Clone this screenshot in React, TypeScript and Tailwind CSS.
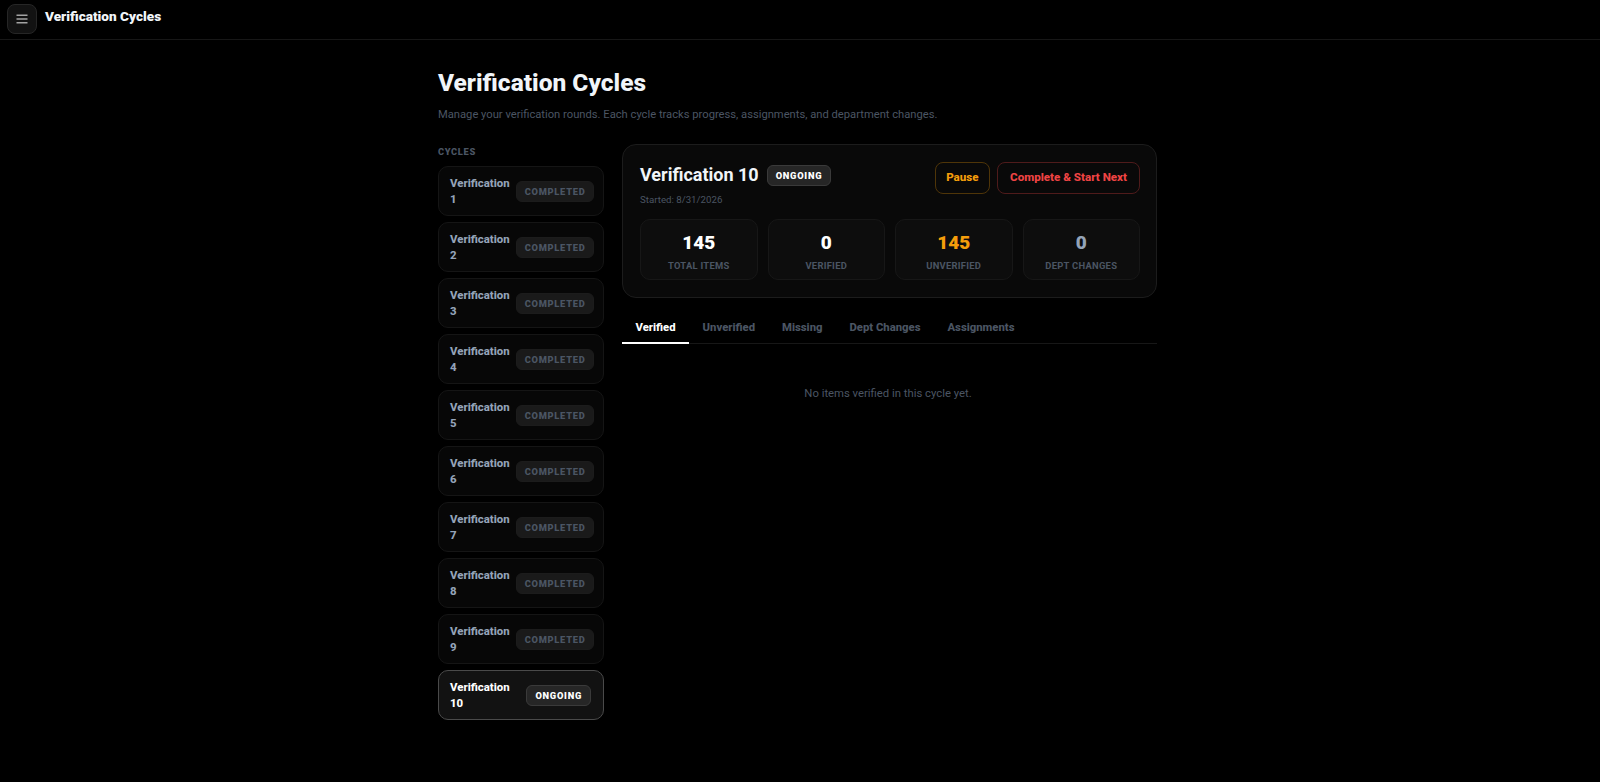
const font = "font-['Roboto','Noto_Sans',sans-serif]";

const cycles = [1, 2, 3, 4, 5, 6, 7, 8, 9, 10];

const stats = [
  { label: "TOTAL ITEMS", value: "145", color: "text-white" },
  { label: "VERIFIED", value: "0", color: "text-white" },
  { label: "UNVERIFIED", value: "145", color: "text-[#f59e0b]" },
  { label: "DEPT CHANGES", value: "0", color: "text-[#94a3b8]" },
];

const tabs = ["Verified", "Unverified", "Missing", "Dept Changes", "Assignments"];

function Badge({ ongoing }: { ongoing: boolean }) {
  return ongoing ? (
    <span className="shrink-0 rounded-[6px] border border-[#3a3a3a] bg-[#262626] px-[8px] py-[2px] text-[9.3px] font-black leading-[15px] tracking-[0.08em] text-white">
      ONGOING
    </span>
  ) : (
    <span className="shrink-0 rounded-[6px] border border-[#1c1c1c] bg-[#1a1a1a] px-[8px] py-[2px] text-[9.3px] font-black leading-[15px] tracking-[0.08em] text-[#4b5563]">
      COMPLETED
    </span>
  );
}

export default function App() {
  return (
    <div className={`${font} min-h-[782px] bg-black`}>
      <header className="flex h-[40px] items-start gap-[8px] border-b border-[#171717] pl-[7px] pt-[4px]">
        <button className="flex h-[30px] w-[30px] items-center justify-center rounded-[8px] border border-[#262626] bg-[#121212] text-[#a3a3a3]">
          <svg width="16" height="16" viewBox="0 0 16 16" fill="none" stroke="currentColor" strokeWidth="1.6">
            <path d="M2.5 4.2h11M2.5 8h11M2.5 11.8h11" />
          </svg>
        </button>
        <span className="pt-[3px] text-[13.6px] font-black leading-[18px] text-[#f1f5f9]">Verification Cycles</span>
      </header>

      <main className="ml-[438px] w-[719px] pt-[26px]">
        <h1 className="text-[24.5px] font-extrabold leading-[34px] text-[#f1f5f9]">Verification Cycles</h1>
        <p className="mt-[6px] text-[11.2px] leading-[18px] text-[#4b5563]">
          Manage your verification rounds. Each cycle tracks progress, assignments, and department changes.
        </p>

        <div className="mt-[20px] flex gap-[18px]">
          <aside className="w-[166px] shrink-0">
            <div className="pb-[8px] pt-[2px] text-[9.3px] font-black leading-[12px] tracking-[0.07em] text-[#4b5563]">CYCLES</div>
            <div className="flex flex-col gap-[6px]">
              {cycles.map((n) => {
                const active = n === 10;
                return (
                  <div
                    key={n}
                    className={
                      active
                        ? "flex h-[50px] items-center justify-between gap-[6px] rounded-[10px] border border-[#4a4a4a] bg-[#121212] pl-[11px] pr-[12px]"
                        : "flex h-[50px] items-center justify-between gap-[6px] rounded-[10px] border border-[#151515] bg-[#070707] pl-[11px] pr-[10px]"
                    }
                  >
                    <span className={`text-[11.4px] font-extrabold leading-[16px] ${active ? "text-white" : "text-[#94a3b8]"}`}>
                      Verification {n}
                    </span>
                    <Badge ongoing={active} />
                  </div>
                );
              })}
            </div>
          </aside>

          <section className="min-w-0 flex-1">
            <div className="rounded-[14px] border border-[#1c1c1c] bg-[#090909] pb-[17px] pl-[17px] pr-[16px] pt-[17px]">
              <div className="flex items-start justify-between">
                <div>
                  <div className="flex items-center gap-[8px] pt-[1px]">
                    <h2 className="text-[18px] font-bold leading-[24px] text-[#f1f5f9]">Verification 10</h2>
                    <Badge ongoing />
                  </div>
                  <div className="mt-[6px] text-[9.7px] leading-[14px] text-[#4b5563]">Started: 8/31/2026</div>
                </div>
                <div className="flex gap-[7px]">
                  <button className="h-[32px] rounded-[8px] border border-[#4f3508] px-[10.5px] text-[11.6px] font-extrabold text-[#f59e0b]">Pause</button>
                  <button className="h-[32px] rounded-[8px] border border-[#4f1b1b] px-[12px] text-[11.6px] font-extrabold text-[#ef4444]">Complete &amp; Start Next</button>
                </div>
              </div>
              <div className="mt-[12px] grid grid-cols-4 gap-[10px]">
                {stats.map((s) => (
                  <div key={s.label} className="flex h-[61px] flex-col items-center justify-center rounded-[10px] border border-[#171717] bg-[#0d0d0d] pt-[3px]">
                    <div className={`text-[19px] font-black leading-[24px] ${s.color}`}>{s.value}</div>
                    <div className="mt-[4px] text-[9.4px] font-bold leading-[13px] tracking-[0.03em] text-[#4b5563]">{s.label}</div>
                  </div>
                ))}
              </div>
            </div>

            <nav className="mt-[14px] flex border-b border-[#171717]">
              {tabs.map((t, i) => (
                <div
                  key={t}
                  className={`-mb-px border-b-2 px-[13.5px] pb-[6px] pt-[8px] text-[11.3px] font-extrabold leading-[16px] ${i === 0 ? "border-white text-white" : "border-transparent text-[#4b5563]"}`}
                >
                  {t}
                </div>
              ))}
            </nav>

            <p className="pr-[3px] pt-[41px] text-center text-[11.3px] leading-[18px] text-[#4b5563]">No items verified in this cycle yet.</p>
          </section>
        </div>
      </main>
    </div>
  );
}
